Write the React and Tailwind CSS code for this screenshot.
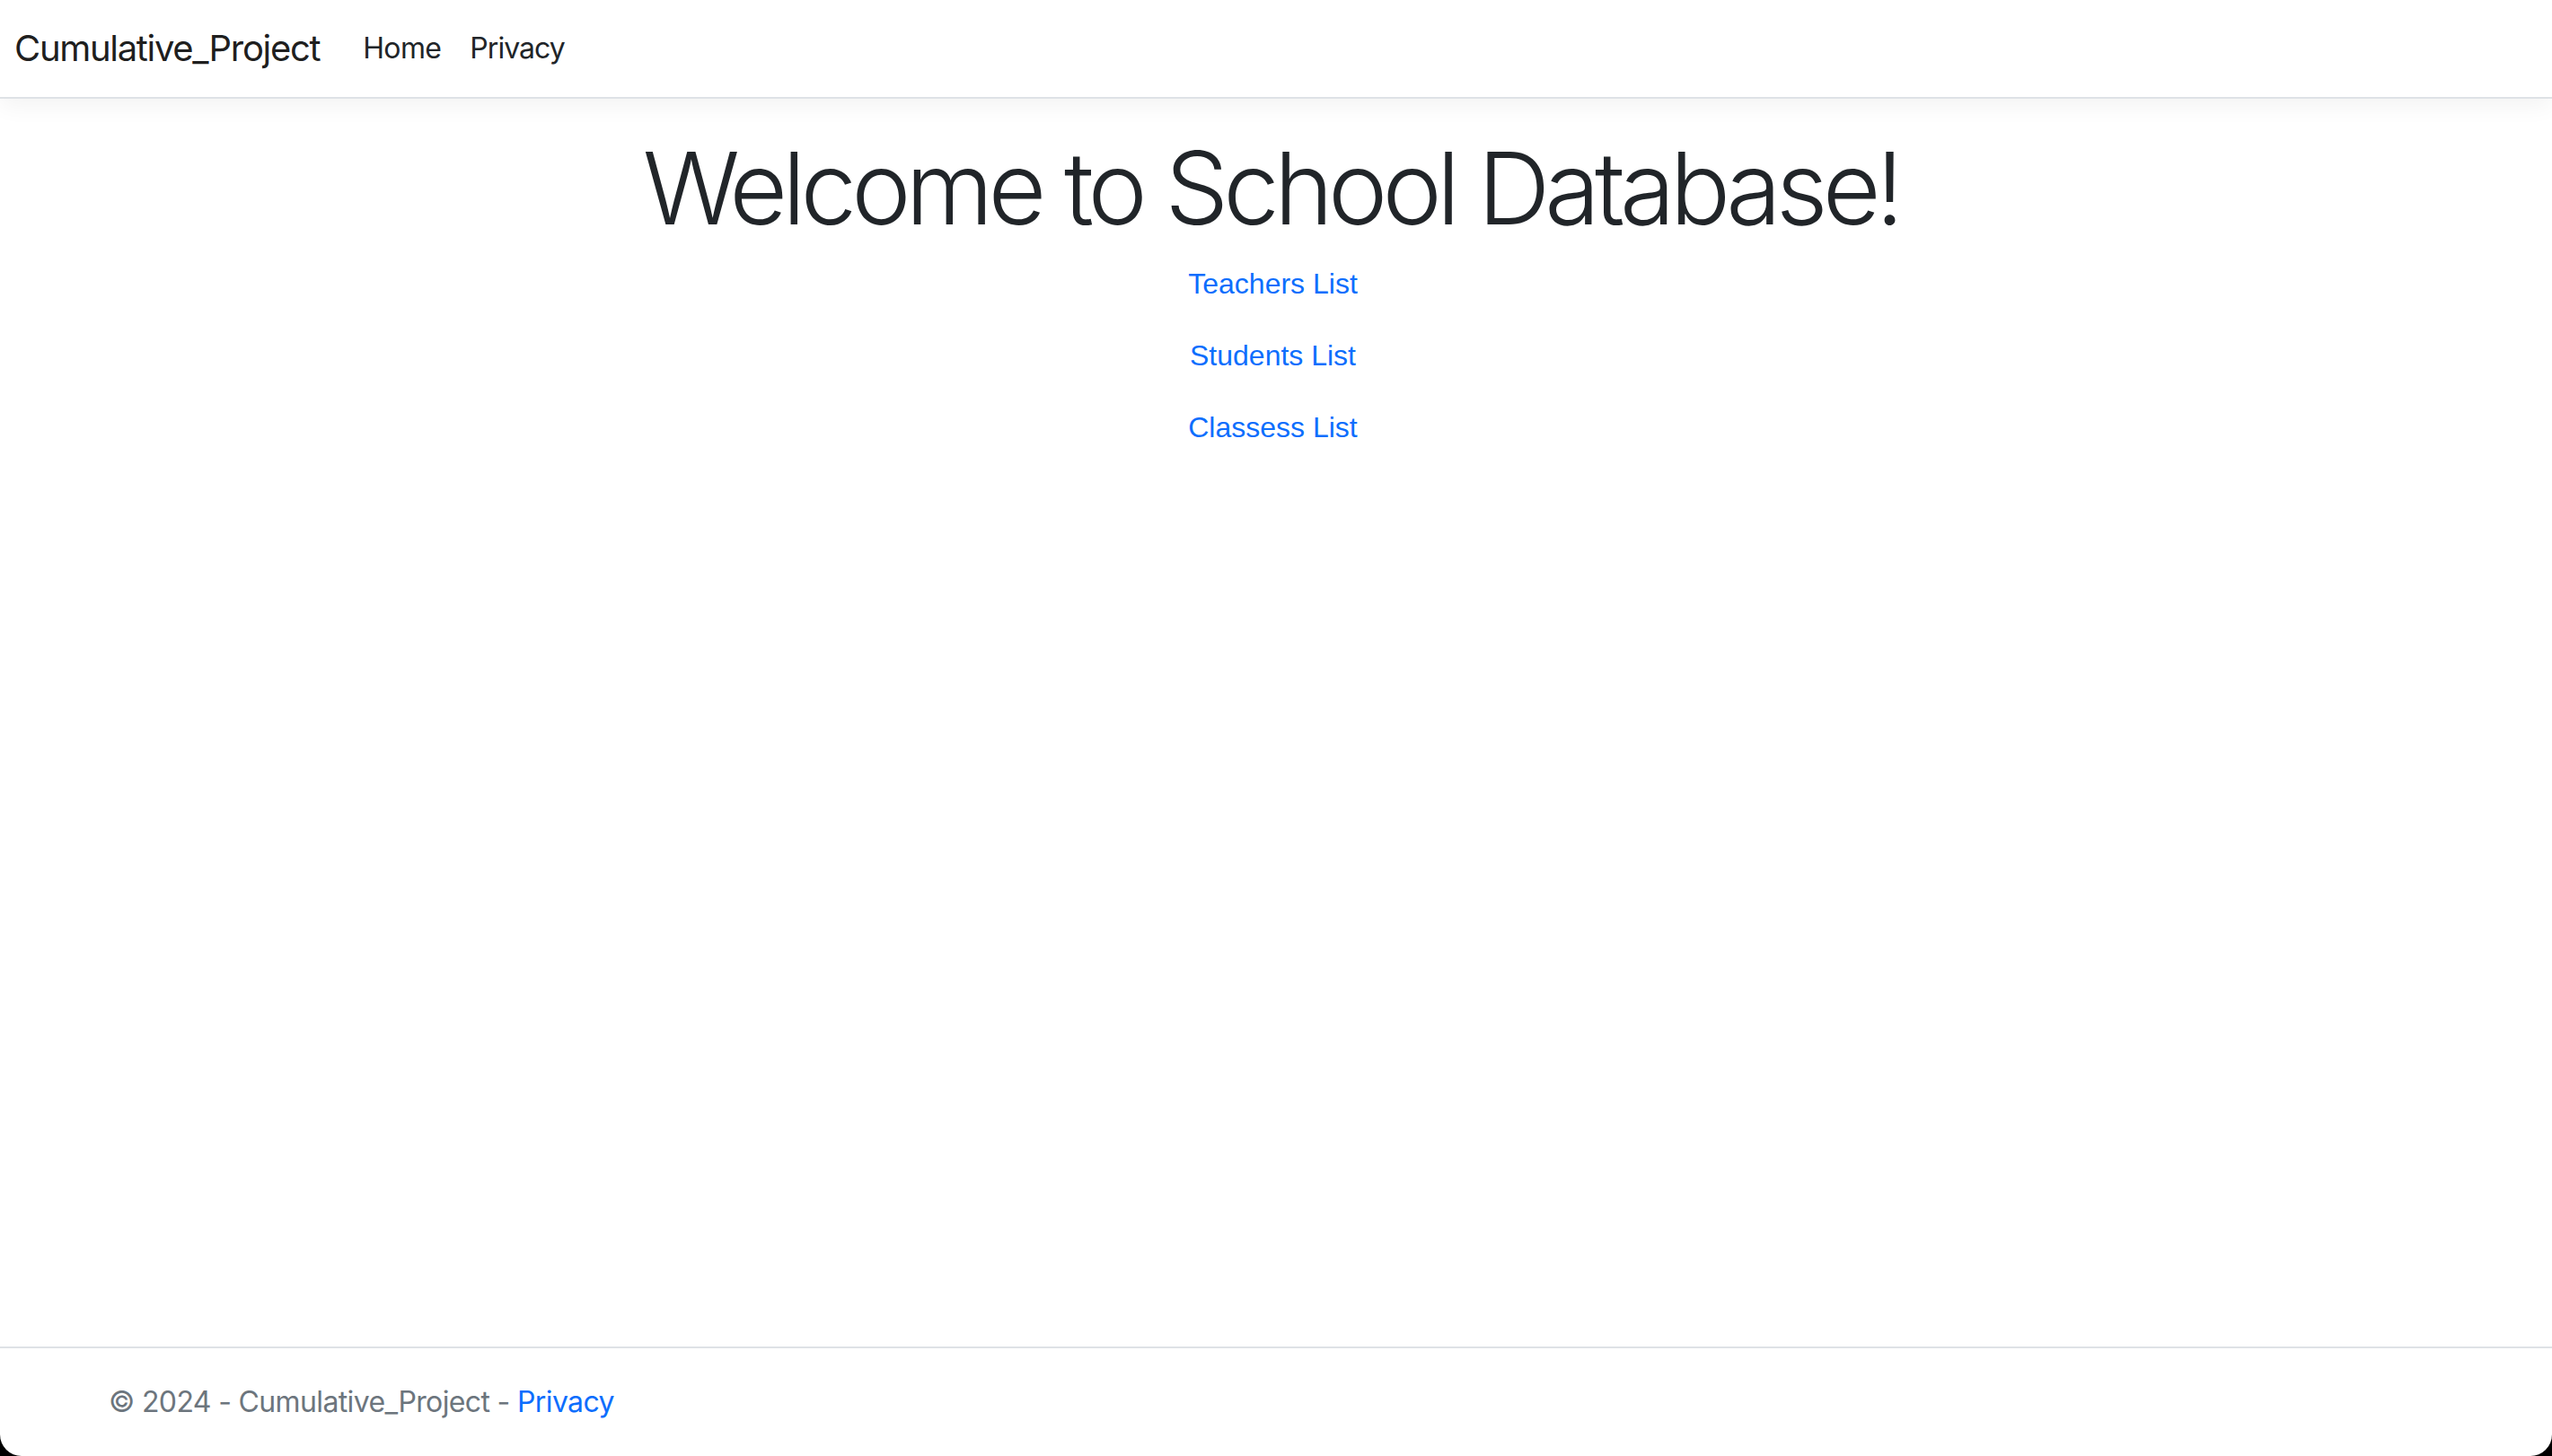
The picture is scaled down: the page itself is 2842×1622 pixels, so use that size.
export default function App() {
    const sans = { fontFamily: "Inter, 'Noto Sans', sans-serif" };

    return (
        <div className="h-[1622px] w-full bg-black">
            <div className="flex h-full flex-col overflow-hidden rounded-b-[24px] bg-white text-[#212529] font-['Inter','Noto_Sans',sans-serif]">
                <header className="relative z-10 flex h-[110px] shrink-0 items-center border-b-2 border-[#dee2e6] bg-white pl-[16px] shadow-[0_8px_24px_rgba(0,0,0,0.05)]">
                    <a href="#" className="mr-[32px] text-[40px] leading-[1.5] tracking-[-0.033em] text-black/90">Cumulative_Project</a>
                    <nav className="flex items-center">
                        <a href="#" className="px-[16px] text-[32px] leading-[1.5] tracking-[-0.02em] text-[#212529]">Home</a>
                        <a href="#" className="px-[16px] text-[32px] leading-[1.5] tracking-[-0.03em] text-[#212529]">Privacy</a>
                    </nav>
                </header>

                <main className="flex-1 pt-[32px] text-center">
                    <h1 className="mb-[16px] pr-[12px] text-[112px] font-light leading-[1.2] tracking-[-0.053em]">
                        Welcome to School Database!
                    </h1>
                    <div className="pr-[7px] font-['Liberation_Sans',Arial,sans-serif] text-[32px] leading-[48px]">
                        <p className="mb-[32px]"><a href="#" className="text-[#0d6efd]">Teachers List</a></p>
                        <p className="mb-[32px]"><a href="#" className="text-[#0d6efd]">Students List</a></p>
                        <p className="mb-[32px]"><a href="#" className="text-[#0d6efd]">Classess List</a></p>
                    </div>
                </main>

                <footer className="h-[122px] shrink-0 border-t-2 border-[#dee2e6] text-[32px] leading-[120px] tracking-[-0.02em] text-[#6c757d]">
                    <div className="pl-[121px]" style={sans}>
                        © 2024 - Cumulative_Project - <a href="#" className="text-[#0d6efd]">Privacy</a>
                    </div>
                </footer>
            </div>
        </div>
    );
}
